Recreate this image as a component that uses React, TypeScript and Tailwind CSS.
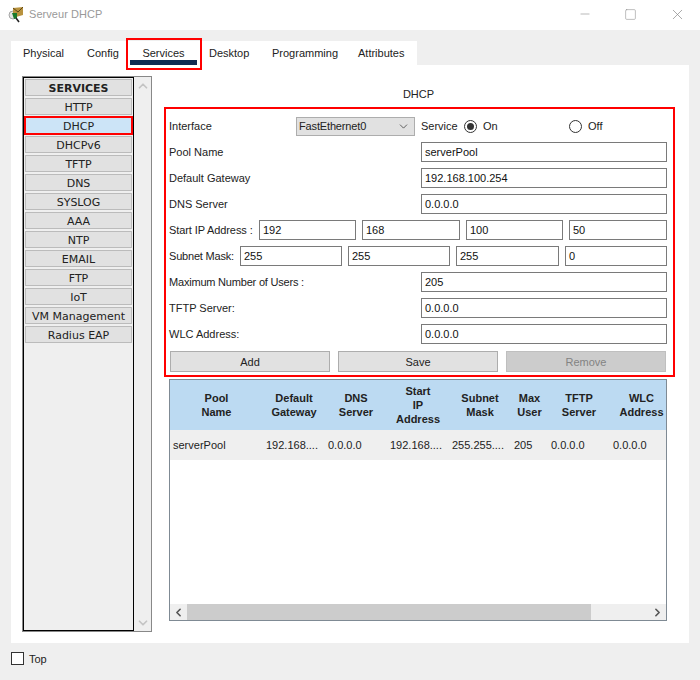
import React from 'react';
import { ChevronDown, ChevronLeft, ChevronRight, ChevronUp, Minus, Square, X } from 'lucide-react';

const tabs = [
  { name: 'Physical', cls: 'w-[64px] pl-3' },
  { name: 'Config', cls: 'w-[55px] pl-3' },
  { name: 'Services', cls: 'w-[67px] justify-center' },
  { name: 'Desktop', cls: 'w-[63px] pl-3' },
  { name: 'Programming', cls: 'w-[86px] pl-3' },
  { name: 'Attributes', cls: 'w-[71px] pl-3' },
];

const services = ['HTTP', 'DHCP', 'DHCPv6', 'TFTP', 'DNS', 'SYSLOG', 'AAA', 'NTP', 'EMAIL', 'FTP', 'IoT', 'VM Management', 'Radius EAP'];

const columns = [
  { title: ['Pool', 'Name'], value: 'serverPool' },
  { title: ['Default', 'Gateway'], value: '192.168....' },
  { title: ['DNS', 'Server'], value: '0.0.0.0' },
  { title: ['Start', 'IP', 'Address'], value: '192.168....' },
  { title: ['Subnet', 'Mask'], value: '255.255....' },
  { title: ['Max', 'User'], value: '205' },
  { title: ['TFTP', 'Server'], value: '0.0.0.0' },
  { title: ['WLC', 'Address'], value: '0.0.0.0' },
];

const Field = ({ value, className }: { value: string; className: string }) => (
  <div className={`h-5 border border-[#7a7a7a] bg-white pl-[3px] leading-[18px] text-[#111] ${className}`}>{value}</div>
);

const Row = ({ label, value, labelCls }: { label: string; value: string; labelCls?: string }) => (
  <div className="flex h-5 items-center">
    <span className={`w-[252px] ${labelCls ?? ''}`}>{label}</span>
    <Field value={value} className="w-[246px]" />
  </div>
);

const Radio = ({ checked }: { checked?: boolean }) => (
  <span className="flex h-[13px] w-[13px] items-center justify-center rounded-full border border-[#333] bg-white">
    {checked && <span className="h-[7px] w-[7px] rounded-full bg-[#333]" />}
  </span>
);

const App: React.FC = () => {
  return (
    <div className="flex h-[680px] w-[700px] flex-col overflow-hidden bg-[#efefef] text-[11px] text-[#222] [font-family:'Liberation_Sans',sans-serif]">
      {/* title bar */}
      <div className="flex h-[30px] shrink-0 items-center bg-white pb-[1px] pl-2">
        <svg width="17" height="17" viewBox="0 0 17 17" className="shrink-0">
          <circle cx="5" cy="9" r="4" fill="#e4e6e4" stroke="#a5a5a5" />
          <path d="M5 2 L15 1 L15 9 L8 11 L5 8 Z" fill="#b8923e" />
          <path d="M5 2 L10 6 L15 1" fill="none" stroke="#5f4714" />
          <path d="M4 7 L9 7 L9 12 L6 13 Z" fill="#1a7a2a" />
          <path d="M8 12 L11 16" stroke="#222" strokeWidth="1.5" />
        </svg>
        <span className="ml-1 text-[11px] tracking-[0.05px] text-[#999]">Serveur DHCP</span>
        <div className="ml-auto flex items-center pb-[1px] text-[#888]">
          <Minus size={14} strokeWidth={1} className="mr-[32px]" />
          <Square size={13} strokeWidth={1} className="mr-[32px]" />
          <X size={17} strokeWidth={1} className="mr-[14px]" />
        </div>
      </div>

      {/* tabs */}
      <div className="ml-[11px] mt-[11px] flex h-6 w-[406px] shrink-0 bg-white">
        {tabs.map(tab => (
          <div key={tab.name} className={`relative flex h-6 items-center ${tab.cls}`}>
            {tab.name}
            {tab.name === 'Services' && (
              <>
                <span className="absolute bottom-0 left-0 h-[5px] w-[67px] bg-[#0f2b52]" />
                <span className="absolute -bottom-[5px] -left-[4px] -top-[3px] w-[76px] border-[2px] border-[#f00]" />
              </>
            )}
          </div>
        ))}
      </div>

      {/* main panel */}
      <div className="ml-[11px] flex h-[578px] w-[678px] shrink-0 gap-3 bg-white pl-[11px] pt-[11px]">
        <div className="flex h-[556px] w-[130px] shrink-0 border border-[#888] bg-[#efefef]">
          <div className="flex w-[111px] shrink-0 flex-col gap-[2px] border border-black p-[1px] text-[#222] [font-family:'DejaVu_Sans',sans-serif]">
            <div className="flex h-[17px] items-center justify-center border border-[#bbb] bg-[#e1e1e1] pt-[3px] font-bold leading-[12px]">SERVICES</div>
            {services.map(name =>
              name === 'DHCP' ? (
                <div key={name} className="-mx-[1px] -my-[1px] flex h-[19px] items-center justify-center border-2 border-[#f00] bg-[#cce4f7] pt-[3px] leading-[12px]">
                  {name}
                </div>
              ) : (
                <div key={name} className="flex h-[17px] items-center justify-center border border-[#bbb] bg-[#e1e1e1] pt-[3px] leading-[12px]">
                  {name}
                </div>
              )
            )}
          </div>
          <div className="flex flex-1 flex-col items-center justify-between pb-[1px] pt-[2px] text-[#c4c4c4]">
            <ChevronUp size={14} strokeWidth={3} />
            <ChevronDown size={14} strokeWidth={3} />
          </div>
        </div>

        <div className="w-[511px]">
          <div className="flex h-[31px] items-center justify-center pr-[2px] pt-[5px]">DHCP</div>
          <div className="flex h-[270px] flex-col gap-[6px] border-2 border-[#f00] pl-[3px] pt-[7px]">
            <div className="flex h-5 items-center">
              <span className="w-[127px]">Interface</span>
              <div className="mt-[1px] flex h-[19px] w-[119px] items-center justify-between border border-[#adadad] bg-[#e1e1e1] pl-[2px] pr-1 tracking-[-0.15px]">
                FastEthernet0
                <ChevronDown size={13} strokeWidth={1.25} />
              </div>
              <span className="ml-[6px] w-[43px]">Service</span>
              <Radio checked />
              <span className="ml-[6px] w-[86px]">On</span>
              <Radio />
              <span className="ml-[6px]">Off</span>
            </div>
            <Row label="Pool Name" value="serverPool" />
            <Row label="Default Gateway" value="192.168.100.254" />
            <Row label="DNS Server" value="0.0.0.0" />
            <div className="flex h-5 items-center">
              <span className="w-[90px] tracking-[-0.1px]">Start IP Address :</span>
              <Field value="192" className="w-[97px]" />
              <Field value="168" className="ml-[6px] w-[98px]" />
              <Field value="100" className="ml-[6px] w-[97px]" />
              <Field value="50" className="ml-[6px] w-[98px]" />
            </div>
            <div className="flex h-5 items-center">
              <span className="w-[71px] tracking-[-0.2px]">Subnet Mask:</span>
              <Field value="255" className="w-[102px]" />
              <Field value="255" className="ml-[6px] w-[102px]" />
              <Field value="255" className="ml-[6px] w-[103px]" />
              <Field value="0" className="ml-[6px] w-[102px]" />
            </div>
            <Row label="Maximum Number of Users :" value="205" labelCls="tracking-[-0.2px]" />
            <Row label="TFTP Server:" value="0.0.0.0" />
            <Row label="WLC Address:" value="0.0.0.0" />
            <div className="mt-[1px] flex h-[21px] gap-2 pl-[1px]">
              <div className="flex w-40 items-center justify-center border border-[#adadad] bg-[#e1e1e1] pt-[1px]">Add</div>
              <div className="flex w-40 items-center justify-center border border-[#adadad] bg-[#e1e1e1] pt-[1px]">Save</div>
              <div className="flex w-40 items-center justify-center border border-[#bfbfbf] bg-[#cccccc] pt-[1px] text-[#838383]">Remove</div>
            </div>
          </div>

          {/* pools table */}
          <div className="ml-[5px] mt-[2px] flex h-[242px] w-[498px] flex-col overflow-hidden border border-[#7f8a94]">
            <div className="flex-1 overflow-hidden">
              <div className="grid w-[503px] grid-cols-[93px_62px_62px_62px_62px_37px_62px_63px]">
                {columns.map(col => (
                  <div key={col.value + col.title[0]} className="flex h-[50px] flex-col items-center justify-center bg-[#bcdaf2] font-bold leading-[14px] text-[#222]">
                    {col.title.map(line => (
                      <span key={line}>{line}</span>
                    ))}
                  </div>
                ))}
                {columns.map(col => (
                  <div key={col.title[0]} className="flex h-[30px] items-center bg-[#efefef] pl-[3px] pt-[1px]">
                    {col.value}
                  </div>
                ))}
              </div>
            </div>
            <div className="flex h-4 shrink-0 items-center bg-[#efefef]">
              <ChevronLeft size={13} strokeWidth={3} className="w-[17px] text-[#555]" />
              <div className="h-full w-[404px] bg-[#cccccc]" />
              <ChevronRight size={13} strokeWidth={3} className="ml-auto mr-[2px] text-[#555]" />
            </div>
          </div>
        </div>
      </div>

      {/* footer */}
      <div className="ml-[11px] mt-[9px] flex h-[13px] items-center gap-[5px]">
        <span className="h-[13px] w-[13px] border border-[#333] bg-white" />
        <span className="pt-[1px]">Top</span>
      </div>
    </div>
  );
};

export default App;
